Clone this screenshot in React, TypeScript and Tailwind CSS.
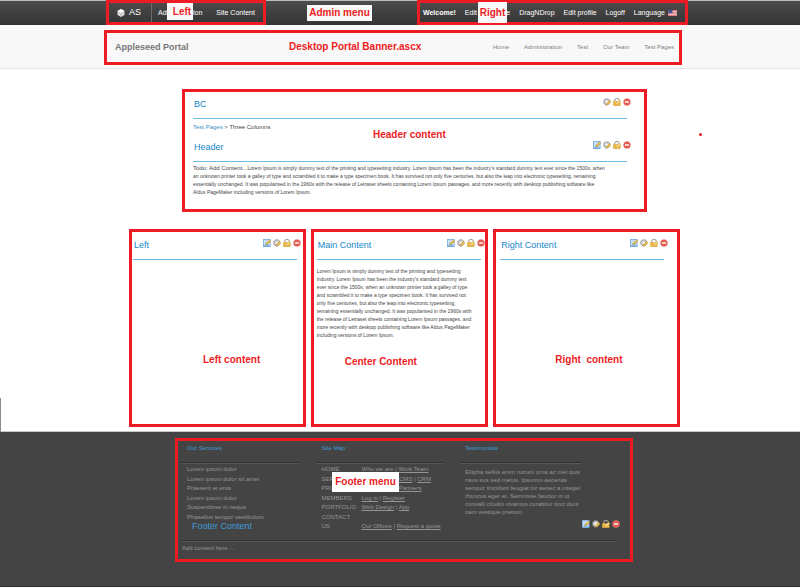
import React from "react";

const PageIcon = () => (
  <svg viewBox="0 0 16 16" className="size-2">
    <rect x="0" y="0" width="15" height="16" rx="1" fill="#6fa5dc" />
    <rect x="1.5" y="1.5" width="12" height="12" fill="#c9e1f8" />
    <path d="M2 13.5L8 9l6 4.5z" fill="#8dbbe8" />
    <path d="M5 12l1-3.5L13 2l3 2.5L8.500 11z" fill="#efc253" stroke="#8f7436" strokeWidth=".8" />
  </svg>
);

const GearIcon = () => (
  <svg viewBox="0 0 16 16" className="size-2">
    <circle cx="7.500" cy="7.500" r="6" fill="#cfcfcf" stroke="#999" strokeWidth="2.4" strokeDasharray="3.500 1.200" />
    <circle cx="7.500" cy="7.500" r="2.200" fill="#fff" />
    <path d="M6.500 14.500l1-4L13 5l3 2.500-6 6z" fill="#f0c04c" stroke="#a88433" strokeWidth=".8" />
  </svg>
);

const LockIcon = () => (
  <svg viewBox="0 0 16 16" className="size-2">
    <path d="M3.500 8V4.500a4.500 3.500 0 0 1 9 0V8" fill="none" stroke="#a5a293" strokeWidth="2.200" />
    <rect x="0.500" y="7" width="14" height="8.500" rx="1" fill="#f0bb45" stroke="#cf9c33" />
    <path d="M5 13.500l1.500-3.500L13 5l3 2-7 5.500z" fill="#fbe29a" stroke="#b58a2c" strokeWidth=".7" />
  </svg>
);

const RemoveIcon = () => (
  <svg viewBox="0 0 16 16" className="size-2">
    <circle cx="8" cy="8" r="7" fill="#e2574c" stroke="#ee9088" />
    <rect x="4" y="6.600" width="8" height="2.800" fill="#fff" />
  </svg>
);

function Tools({ edit = true }: { edit?: boolean }) {
  return (
    <div className="-mr-1 flex h-2 gap-[2px]">
      {edit && <button aria-label="Edit content"><PageIcon /></button>}
      <button aria-label="Module settings"><GearIcon /></button>
      <button aria-label="Permissions"><LockIcon /></button>
      <button aria-label="Delete module"><RemoveIcon /></button>
    </div>
  );
}

function ModuleTitle({ title, edit = true }: { title: string; edit?: boolean }) {
  return (
    <div className="flex h-[27px] justify-between border-b border-[#6fbde6] pt-[6px] pl-px">
      <h2 className="pt-px text-[9px] leading-[10px] text-[#1688cb]">{title}</h2>
      <Tools edit={edit} />
    </div>
  );
}

function Note({ className, children }: { className: string; children: React.ReactNode }) {
  return (
    <strong className={`absolute z-10 flex items-center justify-center text-[10px] leading-3 font-bold whitespace-pre text-[#ed1c24] ${className}`}>
      {children}
    </strong>
  );
}

function Lines({ lines }: { lines: string[] }) {
  return (
    <>
      {lines.map((line) => (
        <span key={line} className="block whitespace-nowrap">{line}</span>
      ))}
    </>
  );
}

const headerLines = [
  "an unknown printer took a galley of type and scrambled it to make a type specimen book. It has survived not only five centuries, but also the leap into electronic typesetting, remaining",
  "essentially unchanged. It was popularised in the 1960s with the release of Letraset sheets containing Lorem Ipsum passages, and more recently with desktop publishing software like",
  "Aldus PageMaker including versions of Lorem Ipsum.",
];

const mainLines = [
  "Lorem Ipsum is simply dummy text of the printing and typesetting",
  "industry. Lorem Ipsum has been the industry's standard dummy text",
  "ever since the 1500s, when an unknown printer took a galley of type",
  "and scrambled it to make a type specimen book. It has survived not",
  "only five centuries, but also the leap into electronic typesetting,",
  "remaining essentially unchanged. It was popularised in the 1960s with",
  "the release of Letraset sheets containing Lorem Ipsum passages, and",
  "more recently with desktop publishing software like Aldus PageMaker",
  "including versions of Lorem Ipsum.",
];

const testimonialLines = [
  "Elitpha sellus enim rutrum orna ac met quis",
  "risus sus sed metus. Ipsumm aecenas",
  "sempor tincidunt feugiat tur aenec a integet",
  "rhoncus eger et. Semnisse fauctor in ut",
  "convalli citudin vivamus curabitur tinci dunt",
  "nam vestique pretium.",
];

const services = [
  "Lorem ipsum dolor",
  "Lorem ipsum dolor sit amet",
  "Praesent et eros",
  "Lorem ipsum dolor",
  "Suspendisse in neque",
  "Phasellus tempor vestibulum",
];

const siteMap: [string, string[]][] = [
  ["HOME", ["Who we are", "Work Team"]],
  ["SERVICES", ["Web Design", "CMS", "CRM"]],
  ["PRODUCTS", ["Our Product", "Partners"]],
  ["MEMBERS", ["Log in", "Register"]],
  ["PORTFOLIO", ["Web Design", "App"]],
  ["CONTACT US", ["Our Offices", "Request a quote"]],
];

function FooterHeading({ children }: { children: string }) {
  return (
    <h3 className="h-[22px] border-b border-[#303030] pt-[3px] pl-[5px] text-[6px] leading-[9px] text-[#3f9bd6] shadow-[0_1px_0_#5a5a5a]">
      {children}
    </h3>
  );
}

export default function App() {
  return (
    <div className="relative flex min-h-screen flex-col overflow-x-hidden bg-white font-['Liberation_Sans',Arial,sans-serif] text-[#444]">
      <header>
        <div className="border-t border-[#b9bdbb] bg-linear-to-b from-[#4c4c4c] to-[#343434] text-[7px] leading-[9px] text-white">
          <div className="relative mx-auto flex h-6 w-full max-w-[592px] items-stretch justify-between pr-2 pl-[2px]">
            <nav aria-label="Administration" className="relative -mt-px flex w-[160px] items-center border-[3px] border-[#ed1c24] pl-2">
              <a href="#" className="flex h-full w-[35px] items-center gap-1 border-r border-[#6d6d6d] text-[9px]">
                <svg viewBox="0 0 16 16" className="size-2">
                  <path d="M8 0l7 4v8l-7 4-7-4V4z" fill="#d8d8d8" />
                  <path d="M1 4l7 4 7-4M8 8v8" stroke="#a5a5a5" fill="none" />
                  <path d="M8 0l7 4-7 4-7-4z" fill="#fff" />
                </svg>
                AS
              </a>
              <a href="#" className="pl-[6px]">Administration</a>
              <a href="#" className="pl-[14px]">Site Content</a>
              <Note className="top-0 left-[58px] h-[17px] w-[26px] bg-[#f8f8f8] pl-1">Left</Note>
            </nav>
            <Note className="top-1 left-[203px] h-4 w-[65px] bg-[#f8f8f8]">Admin menu</Note>
            <nav aria-label="Account" className="relative -mt-px flex w-[271px] items-center justify-between border-[3px] border-[#ed1c24] pr-2 pl-[3px]">
              <strong>Welcome!</strong>
              <a href="#">Edit This Page</a>
              <a href="#">DragNDrop</a>
              <a href="#">Edit profile</a>
              <a href="#">Logoff</a>
              <a href="#" className="flex items-center gap-[3px]">
                Language
                <svg viewBox="0 0 16 11" className="h-[6px] w-[9px]">
                  <rect width="16" height="11" fill="#f2dede" />
                  <path d="M0 1h16M0 4h16M0 7h16M0 10h16" stroke="#d4545c" strokeWidth="1.4" />
                  <rect width="8" height="6" fill="#47548f" />
                </svg>
              </a>
              <Note className="-top-px left-[58px] h-[21px] w-[29px] bg-[#f8f8f8]">Right</Note>
            </nav>
          </div>
        </div>
        <div className="border-b border-[#e6e6e6] bg-[#f8f8f8] pt-[5px] pb-[3px]">
          <div className="mx-auto w-full max-w-[592px] pr-[14px]">
            <div className="relative flex h-[35px] items-center justify-between border-[3px] border-[#ed1c24] pr-[5px] pb-[2px] pl-2">
              <h1 className="text-[9px] leading-[10px] font-bold text-[#777]">Appleseed Portal</h1>
              <nav aria-label="Portal" className="flex gap-[15px] text-[6px] leading-[8px] text-[#808080]">
                <a href="#">Home</a>
                <a href="#">Administration</a>
                <a href="#">Test</a>
                <a href="#">Our Team</a>
                <a href="#">Test Pages</a>
              </nav>
              <Note className="top-2 left-[182px]">Desktop Portal Banner.ascx</Note>
            </div>
          </div>
        </div>
      </header>

      <main className="relative mx-auto w-full max-w-[592px] pt-5 pb-1">
        <section className="relative mr-[49px] ml-[78px] min-h-[123px] border-[3px] border-[#ed1c24] pr-[17px] pl-2">
          <ModuleTitle title="BC" edit={false} />
          <p className="text-[6px] leading-4">
            <a href="#" className="text-[#3a8fc4]">Test Pages</a> &gt; Three Columns
          </p>
          <ModuleTitle title="Header" />
          <p className="pt-[2px] text-[5px] leading-[8px]">
            <span className="block whitespace-nowrap">
              <span className="text-[6px]">Todo: Add Content...</span>
              Lorem Ipsum is simply dummy text of the printing and typesetting industry. Lorem Ipsum has been the industry's standard dummy text ever since the 1500s, when
            </span>
            <Lines lines={headerLines} />
          </p>
          <Note className="top-[37px] left-[188px]">Header content</Note>
        </section>
        <i className="absolute top-16 -right-[6px] size-[3px] rounded-full bg-[#ed1c24]" />

        <div className="mt-[17px] mr-4 ml-[25px] grid min-h-[198px] grid-cols-[177fr_178fr_187fr] gap-[5px]">
          <section className="relative border-[3px] border-[#ed1c24] pt-px pr-[6px] pl-px">
            <ModuleTitle title="Left" />
            <Note className="top-[122px] left-[71px]">Left content</Note>
          </section>
          <section className="relative border-[3px] border-[#ed1c24] pt-px pr-1 pl-[3px]">
            <ModuleTitle title="Main Content" />
            <p className="pt-[7px] text-[5px] leading-[8px]">
              <Lines lines={mainLines} />
            </p>
            <Note className="top-[124px] left-[31px]">Center Content</Note>
          </section>
          <section className="relative border-[3px] border-[#ed1c24] pt-px pr-[13px] pl-[4px]">
            <ModuleTitle title="Right Content" />
            <Note className="top-[122px] left-[59px]">{"Right  content"}</Note>
          </section>
        </div>
      </main>

      <footer className="relative grow border-t border-b border-t-[#c8c8c8] border-b-[#2c2c2c] bg-[#444] pt-[6px] text-[#959595]">
        <i className="absolute bottom-full left-0 h-[34px] w-px bg-[#8a8a8a]" />
        <div className="mx-auto w-full max-w-[592px] pr-[63px] pl-[71px]">
          <div className="relative min-h-[124px] border-[3px] border-[#ed1c24] pr-[14px] pl-1 text-[6px] leading-[9px]">
            <div className="flex justify-between pr-[35px]">
              <section className="w-[116px]">
                <FooterHeading>Our Services</FooterHeading>
                <ul className="mt-[2px] flex h-[57px] flex-col justify-between pl-[5px]">
                  {services.map((s, i) => <li key={i}>{s}</li>)}
                </ul>
              </section>
              <section className="w-[125px]">
                <FooterHeading>Site Map</FooterHeading>
                <dl className="mt-[2px] flex h-[66px] flex-col justify-between pl-[5px]">
                  {siteMap.map(([name, links]) => (
                    <div key={name} className="flex items-end">
                      <dt className="w-10 shrink-0 pr-2">{name}</dt>
                      <dd className="whitespace-nowrap">
                        {links.map((l, i) => (
                          <React.Fragment key={l}>
                            {i > 0 && " | "}
                            <a href="#" className="underline">{l}</a>
                          </React.Fragment>
                        ))}
                      </dd>
                    </div>
                  ))}
                </dl>
              </section>
              <section className="w-[121px]">
                <FooterHeading>Testimonials</FooterHeading>
                <p className="pt-[5px] pl-[5px] leading-[8px]">
                  <Lines lines={testimonialLines} />
                </p>
              </section>
            </div>
            <div className="-mt-[11px] flex h-[21px] justify-between border-b border-[#303030] pl-[10px] shadow-[0_1px_0_#5a5a5a]">
              <h2 className="pt-px text-[9px] leading-[10px] text-[#3d9bd8]">Footer Content</h2>
              <Tools />
            </div>
            <p className="pt-[3px]">Add content here ...</p>
            <Note className="top-[31px] left-[154px] h-5 w-[67px] bg-white">Footer menu</Note>
          </div>
        </div>
      </footer>
    </div>
  );
}
